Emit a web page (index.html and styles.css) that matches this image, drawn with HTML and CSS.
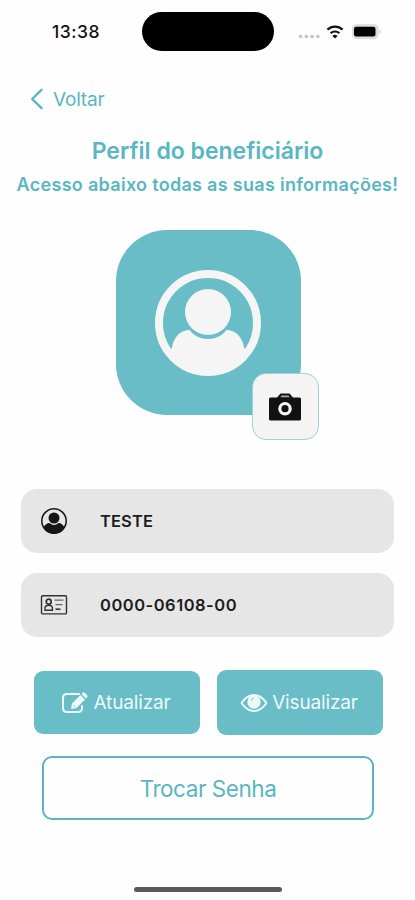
FILE: index.html
```
<!DOCTYPE html>
<html lang="pt-BR">
<head>
  <meta charset="UTF-8">
  <meta name="viewport" content="width=device-width, initial-scale=1">
  <title>Perfil do beneficiário</title>
  <link rel="stylesheet" href="styles.css">
</head>
<body>
  <div class="status-bar">
    <span class="time">13:38</span>
    <div class="island"></div>
    <svg class="status-icons" width="88" height="20" viewBox="0 0 88 20">
      <g fill="#c4c4c4">
        <circle cx="3.5" cy="14.5" r="1.8"/>
        <circle cx="9.3" cy="14.5" r="1.8"/>
        <circle cx="15" cy="14.5" r="1.8"/>
        <circle cx="20.8" cy="14.5" r="1.8"/>
      </g>
      <g fill="none" stroke="#111" stroke-width="2.2">
        <path d="M30.4 7.600a11 11 0 0 1 15.200 0"/>
        <path d="M33.6 11.200a6.500 6.500 0 0 1 8.800 0"/>
      </g>
      <path d="M38 16.6l-2.600-2.700a4 4 0 0 1 5.200 0z" fill="#111"/>
      <rect x="55" y="2.2" width="26.5" height="15" rx="4.5" fill="#dcdcdc"/>
      <rect x="57" y="4.7" width="21.5" height="9.8" rx="2.2" fill="#000"/>
      <path d="M82.5 7.700q3 2 0 4z" fill="#c8c8c8"/>
    </svg>
  </div>

  <a class="back" href="#">
    <svg width="14" height="22" viewBox="0 0 14 22">
      <path d="M11.5 1.800L2.200 11l9.300 9.200" fill="none" stroke="currentColor" stroke-width="2.4" stroke-linecap="round" stroke-linejoin="round"/>
    </svg>
    <span>Voltar</span>
  </a>

  <h1>Perfil do beneficiário</h1>
  <p class="subtitle">Acesso abaixo todas as suas informações!</p>

  <div class="avatar">
    <svg width="106" height="106" viewBox="0 0 106 106">
      <circle cx="53" cy="53" r="49" fill="none" stroke="#f5f5f5" stroke-width="8"/>
      <circle cx="53" cy="42" r="23" fill="#f5f5f5"/>
      <path d="M14 80L17 78C18 68 25 60 34.500 60C39 66 46 69 53 69S67 66 71.500 60C81 60 88 68 89 78L92 80A49 49 0 0 1 14 80z" fill="#f5f5f5"/>
    </svg>
    <button class="camera" aria-label="Alterar foto">
      <svg width="34" height="30" viewBox="0 0 34 30">
        <path d="M2.5 5.500H9L12.500 1.500H21.500L25 5.500H31.500Q33 5.500 33 7V27Q33 28.500 31.500 28.500H2.500Q1 28.500 1 27V7Q1 5.500 2.500 5.500z" fill="#111"/>
        <path d="M13.5 3.500H20.500L21.500 5.200H12.500z" fill="#aaa"/>
        <circle cx="17" cy="16.7" r="5.2" fill="none" stroke="#f5f5f5" stroke-width="3.2"/>
      </svg>
    </button>
  </div>

  <div class="field">
    <svg width="28" height="28" viewBox="0 0 28 28">
      <circle cx="14" cy="14" r="12.2" fill="none" stroke="#161616" stroke-width="1.5"/>
      <circle cx="14" cy="11" r="5.5" fill="#161616"/>
      <path d="M3.5 20.500C5 17.500 7 16 9.500 16Q14 20 18.500 16C21 16 23 17.500 24.500 20.500A12 12 0 0 1 3.500 20.500z" fill="#161616"/>
    </svg>
    <span>TESTE</span>
  </div>
  <div class="field number">
    <svg width="28" height="28" viewBox="0 0 28 28" fill="none" stroke="#333">
      <rect x="1.5" y="4.7" width="25" height="18.2" rx="1.2" stroke-width="1.4"/>
      <circle cx="8.7" cy="10.7" r="2.5" stroke-width="1.7"/>
      <path d="M5 19.300V17Q5 14.200 8.700 14.200T12.400 17V19.300z" stroke-width="1.4"/>
      <path d="M14.5 9.200H23.500M15.500 13.700H22.500" stroke-width="1.2" stroke="#666"/>
      <path d="M15.5 18.200H20.500" stroke-width="1.6"/>
    </svg>
    <span>0000-06108-00</span>
  </div>

  <div class="actions">
    <button class="update">
      <svg width="28" height="24" viewBox="0 0 28 24">
        <path d="M18 3H6Q2 3 2 7V17Q2 21 6 21H17Q21 21 21 17V15" fill="none" stroke="#eefafa" stroke-width="2" stroke-linecap="round"/>
        <path d="M10 18L11 12.500L19.500 4L24 8.500L15.500 17zM20.500 3L21.700 1.800Q22.800 .8 24 2L26 4Q27.200 5.200 26.200 6.300L25 7.500z" fill="#eefafa"/>
        <path d="M12.3 14L14 15.700" fill="none" stroke="#68bdc7" stroke-width=".8"/>
      </svg>
      <span>Atualizar</span>
    </button>
    <button class="view">
      <svg width="28" height="20" viewBox="0 0 28 20">
        <path d="M1.5 10Q7 2 14 2T26.500 10Q21 18 14 18T1.500 10z" fill="none" stroke="#eefafa" stroke-width="2" stroke-linejoin="round"/>
        <circle cx="14" cy="9" r="6.7" fill="#eefafa"/>
        <path d="M11 7.500Q11.500 5.500 13.500 5" fill="none" stroke="#68bdc7" stroke-width=".8" stroke-linecap="round"/>
      </svg>
      <span>Visualizar</span>
    </button>
  </div>

  <button class="password"><span>Trocar Senha</span></button>

  <div class="home-indicator"></div>
</body>
</html>
```

FILE: styles.css
```
* {
  box-sizing: border-box;
}

body {
  margin: 0;
  height: 900px;
  overflow: hidden;
  background: #fefefe;
  color: #58b7c2;
  font-family: Inter, sans-serif;
}

button {
  padding: 0;
  border: none;
  font-family: inherit;
  cursor: pointer;
}

svg {
  display: block;
  flex-shrink: 0;
}

.status-bar {
  display: flex;
  align-items: center;
  height: 63px;
  padding-left: 52px;
}

.time {
  width: 90px;
  color: #111;
  font-size: 17.5px;
  font-weight: 500;
  letter-spacing: 0.5px;
}

.island {
  width: 132px;
  height: 39px;
  border-radius: 20px;
  background: #000;
}

.status-icons {
  margin-left: 23px;
}

.back {
  display: flex;
  align-items: center;
  gap: 9px;
  height: 24px;
  margin: 24px 0 0 30px;
  color: #58b7c2;
  font-size: 19px;
  letter-spacing: -0.2px;
  text-decoration: none;
}

h1 {
  margin: 26px 0 0;
  font-size: 23px;
  font-weight: 600;
  line-height: 28px;
  text-align: center;
  white-space: nowrap;
}

.subtitle {
  margin: 8px 0 0;
  font-size: 18px;
  font-weight: 600;
  letter-spacing: 0.3px;
  line-height: 24px;
  text-align: center;
  white-space: nowrap;
}

.avatar {
  position: relative;
  display: flex;
  align-items: center;
  justify-content: center;
  width: 185px;
  height: 185px;
  margin: 33px 0 0 115.5px;
  border-radius: 51px;
  background: #68bdc7;
}

.camera {
  position: absolute;
  right: -18px;
  bottom: -25px;
  display: flex;
  align-items: center;
  justify-content: center;
  width: 67px;
  height: 67px;
  border: 1px solid #9fd1d7;
  border-radius: 14px;
  background: #f4f4f4;
}

.field {
  display: flex;
  align-items: center;
  gap: 32px;
  height: 64px;
  margin: 20px 21px 0;
  padding-left: 19px;
  border-radius: 16px;
  background: #e6e6e6;
  color: #1c1c1c;
  font-size: 16.5px;
  font-weight: 600;
  letter-spacing: 0.1px;
}

.avatar + .field {
  margin-top: 74px;
}

.number {
  letter-spacing: 0.5px;
}

.actions {
  display: flex;
  align-items: center;
  gap: 17px;
  margin: 33px 0 0 34px;
}

.actions button {
  display: flex;
  align-items: center;
  justify-content: center;
  gap: 4px;
  width: 166px;
  height: 63px;
  padding-right: 2px;
  border-radius: 9px;
  background: #68bdc7;
  color: #eefafa;
  font-size: 19px;
  letter-spacing: -0.15px;
}

.actions .view {
  height: 65px;
}

.password {
  display: block;
  width: 332px;
  height: 64px;
  margin: 21px 0 0 42px;
  border: 2px solid #58b7c2;
  border-radius: 10px;
  background: transparent;
  color: #58b7c2;
  font-size: 22.5px;
  letter-spacing: -0.45px;
}

.home-indicator {
  width: 148px;
  height: 5px;
  margin: 67px 0 0 134px;
  border-radius: 3px;
  background: #5b5b5b;
}
```
